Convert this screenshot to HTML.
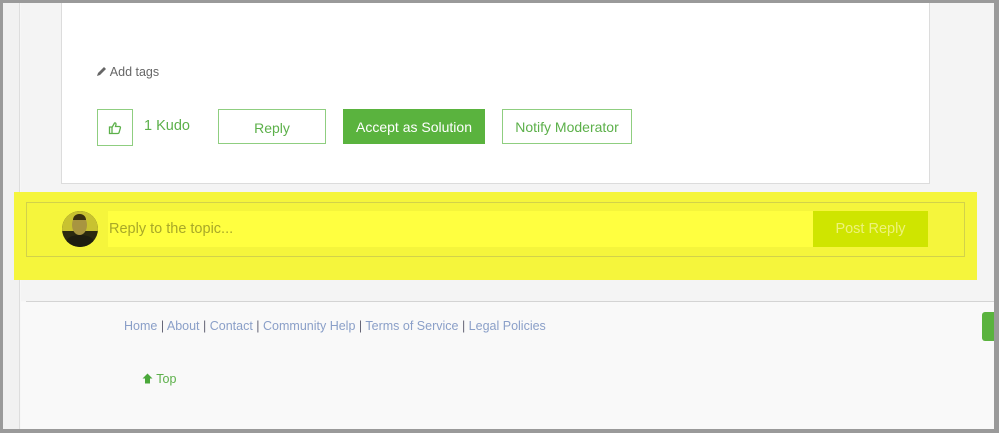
<!DOCTYPE html>
<html><head><meta charset="utf-8"><style>
*{margin:0;padding:0;box-sizing:border-box}
body{width:999px;height:433px;overflow:hidden;background:#f7f7f7;font-family:"Liberation Sans",sans-serif;position:relative}
.a{position:absolute}
.frame{left:0;top:0;width:999px;height:433px;border:3px solid #9a9a9a;border-right-width:5px;border-bottom-width:4px;z-index:10;pointer-events:none}
.btn{border:1px solid #8fce80;color:#5cb04a;font-size:14px;display:flex;align-items:center;justify-content:center;background:#fff}
</style></head><body>
<div class="a" style="left:3px;top:3px;width:17px;height:430px;background:#f1f1f1;border-right:1px solid #ddd"></div>
<div class="a" style="left:21px;top:3px;width:975px;height:298px;background:#f4f4f4"></div>
<div class="a" style="left:61px;top:3px;width:869px;height:181px;background:#fff;border:1px solid #dcdcdc;border-top:none"></div>
<div class="a" style="left:96px;top:65px;font-size:12.5px;color:#666">
<svg width="11" height="11" viewBox="0 0 11 11" style="vertical-align:-1px"><path d="M1 10 L2 7 L8 1 L10 3 L4 9 Z" fill="#666"/></svg> Add tags</div>
<div class="a btn" style="left:97px;top:109px;width:36px;height:37px">
<svg width="14" height="14" viewBox="0 0 14 14"><path d="M1.5 6h2.5v6.5H1.5z M4 6.5 L6.5 2 Q8 1.5 8 3.5 L7.5 5.5 H11.5 Q12.8 5.8 12.3 7.2 L11 11.8 Q10.6 12.5 9.8 12.5 H4" fill="none" stroke="#5cb04a" stroke-width="1.3"/></svg></div>
<div class="a" style="left:144px;top:118px;font-size:14.5px;color:#5cb04a">1 Kudo</div>
<div class="a btn" style="left:218px;top:109px;width:108px;height:35px;padding-top:2px">Reply</div>
<div class="a btn" style="left:343px;top:109px;width:142px;height:35px;background:#5ab33e;border-color:#5ab33e;color:#fff">Accept as Solution</div>
<div class="a btn" style="left:502px;top:109px;width:130px;height:35px">Notify Moderator</div>
<div class="a" style="left:14px;top:192px;width:963px;height:88px;background:#f5f53c"></div>
<div class="a" style="left:26px;top:202px;width:939px;height:55px;border:1px solid #d2d24a"></div>
<div class="a" style="left:62px;top:211px;width:36px;height:36px;border-radius:50%;background:#2b2a10;overflow:hidden">
<div class="a" style="left:0;top:0;width:36px;height:20px;background:#c8c230"></div>
<div class="a" style="left:10px;top:4px;width:15px;height:20px;border-radius:50%;background:#a89540"></div>
<div class="a" style="left:11px;top:3px;width:13px;height:6px;border-radius:7px 7px 0 0;background:#3a3010"></div>
<div class="a" style="left:4px;top:24px;width:28px;height:14px;border-radius:50% 50% 0 0;background:#1e1e10"></div></div>
<div class="a" style="left:108px;top:211px;width:705px;height:36px;background:#ffff40;font-size:14.5px;color:#a8a828;line-height:36px;padding-left:1px">Reply to the topic...</div>
<div class="a" style="left:813px;top:211px;width:115px;height:36px;background:#cfe500;color:#eef27a;font-size:14.5px;text-align:center;line-height:36px">Post Reply</div>
<div class="a" style="left:26px;top:301px;width:970px;height:1px;background:#d4d4d4"></div>
<div class="a" style="left:21px;top:302px;width:975px;height:131px;background:#f9f9f9"></div>
<div class="a" style="left:124px;top:319px;font-size:12.5px;color:#8a9fc8;white-space:nowrap">Home <span style="color:#667">|</span> About <span style="color:#667">|</span> Contact <span style="color:#667">|</span> Community Help <span style="color:#667">|</span> Terms of Service <span style="color:#667">|</span> Legal Policies</div>
<div class="a" style="left:142px;top:372px;font-size:12.5px;color:#5cb04a"><svg width="11" height="11" viewBox="0 0 11 11" style="vertical-align:-1px"><path d="M5.5 0.5 L10.5 5.5 L8 5.5 L8 10.5 L3 10.5 L3 5.5 L0.5 5.5Z" fill="#4aa83a"/></svg> Top</div>
<div class="a" style="left:982px;top:312px;width:17px;height:29px;background:#5ab33e;border-radius:3px 0 0 3px"></div>
<div class="a frame"></div>
</body></html>
